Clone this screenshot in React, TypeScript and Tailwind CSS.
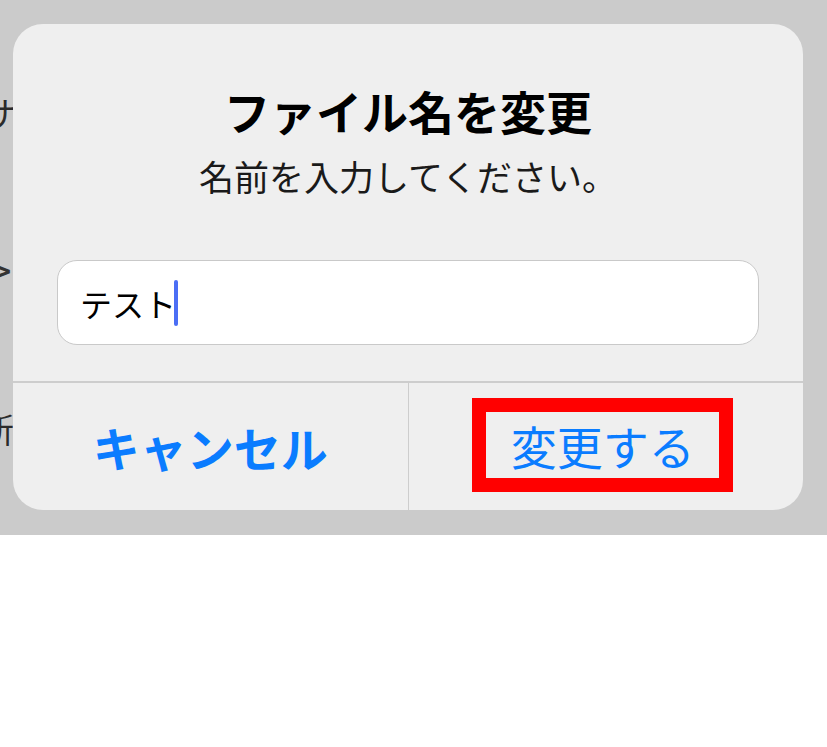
export default function App() {
  const jp = { fontFamily: '"Noto Sans CJK JP", "Noto Sans", sans-serif' };

  return (
    <div className="w-[827px] h-[747px] bg-white" style={jp}>
      <div className="relative w-full h-[535px] bg-[#cbcbcb] overflow-hidden">
        {/* list behind the dialog, only its left edge shows */}
        <div className="flex flex-col text-[34px] text-[#2b2b2b] leading-none">
          <span className="ml-[-18px] mt-[96px]">サ</span>
          <span className="ml-[-14px] mt-[116px] text-[46px] text-[#333]">&gt;</span>
          <span className="ml-[-20px] mt-[120px]">新</span>
        </div>

        {/* dialog */}
        <div className="absolute left-[13px] top-[24px] w-[790px] h-[486px] rounded-[30px] bg-[#efefef] flex flex-col">
          <div className="flex flex-col items-center pt-[60px]">
            <h1 className="text-[46px] font-bold leading-[52px] text-black">
              ファイル名を変更
            </h1>
            <p className="text-[35px] leading-[44px] mt-[18px] text-[#1a1a1a]">
              名前を入力してください。
            </p>
          </div>

          <div className="mx-[44px] mt-[62px] h-[85px] rounded-[20px] bg-white border border-[#c9c9c9] flex items-center pl-[22px]">
            <span className="text-[32px] leading-none text-black">テスト</span>
            <span className="ml-[-2px] w-[4px] h-[46px] rounded-full bg-[#4b6ef5]" />
          </div>

          <div className="mt-auto h-[129px] border-t-2 border-[#cdcdcd] flex">
            <div className="flex-1 flex items-center justify-center border-r border-[#cdcdcd]">
              <span className="text-[47px] font-bold text-[#0a7cff] leading-none">
                キャンセル
              </span>
            </div>
            <div className="flex-1 flex items-center justify-center">
              <span className="mr-[6px] mb-[4px] border-[14px] border-[#ff0000] w-[261px] h-[94px] flex items-center justify-center">
                <span className="text-[46px] text-[#0a7cff] leading-none">
                  変更する
                </span>
              </span>
            </div>
          </div>
        </div>
      </div>
    </div>
  );
}
